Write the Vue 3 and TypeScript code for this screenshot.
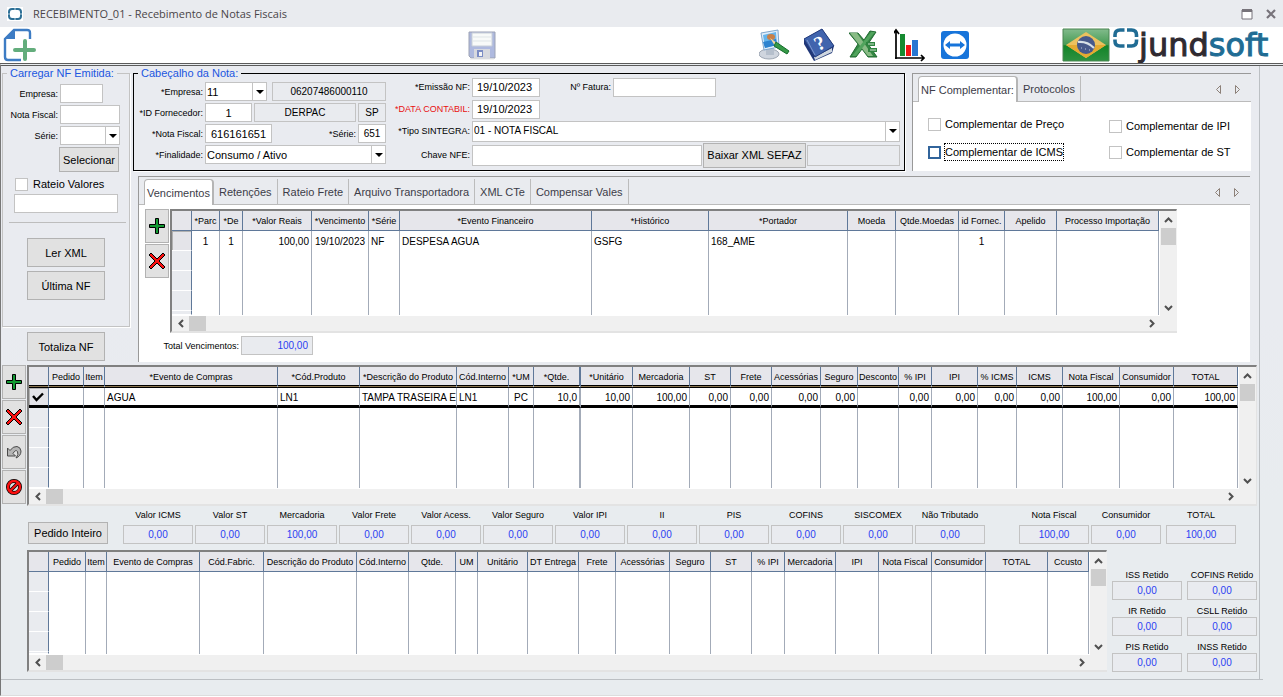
<script setup lang="ts">
import { ref } from 'vue'

interface Column {
  title: string
  width: number
  align?: 'left' | 'center' | 'right'
  value?: string
}

interface Total {
  id: string
  label: string
  value: string
}

const col = (title: string, width: number, value = '', align: Column['align'] = 'right'): Column => ({ title, width, value, align })

const vencimentos: Column[] = [
  col('*Parc', 28, '1', 'center'),
  col('*De', 23, '1', 'center'),
  col('*Valor Reais', 69, '100,00'),
  col('*Vencimento', 57, '19/10/2023', 'center'),
  col('*Série', 31, 'NF', 'left'),
  col('*Evento Financeiro', 192, 'DESPESA AGUA', 'left'),
  col('*Histórico', 117, 'GSFG', 'left'),
  col('*Portador', 139, '168_AME', 'left'),
  col('Moeda', 48),
  col('Qtde.Moedas', 63),
  col('id Fornec.', 46, '1', 'center'),
  col('Apelido', 52),
  col('Processo Importação', 102),
]

const itens: Column[] = [
  col('Pedido', 35),
  col('Item', 21),
  col('*Evento de Compras', 173, 'AGUA', 'left'),
  col('*Cód.Produto', 82, 'LN1', 'left'),
  col('*Descrição do Produto', 97, 'TAMPA TRASEIRA E(', 'left'),
  col('Cód.Interno', 52, 'LN1', 'left'),
  col('*UM', 25, 'PC', 'center'),
  col('*Qtde.', 47, '10,0'),
  col('*Unitário', 52, '10,00'),
  col('Mercadoria', 57, '100,00'),
  col('ST', 41, '0,00'),
  col('Frete', 41, '0,00'),
  col('Acessórias', 49, '0,00'),
  col('Seguro', 37, '0,00'),
  col('Desconto', 41),
  col('% IPI', 33, '0,00'),
  col('IPI', 46, '0,00'),
  col('% ICMS', 39, '0,00'),
  col('ICMS', 46, '0,00'),
  col('Nota Fiscal', 57, '100,00'),
  col('Consumidor', 54, '0,00'),
  col('TOTAL', 64, '100,00'),
]

const pedidos: Column[] = [
  col('Pedido', 37), col('Item', 21), col('Evento de Compras', 93), col('Cód.Fabric.', 64),
  col('Descrição do Produto', 93), col('Cód.Interno', 52), col('Qtde.', 47), col('UM', 22),
  col('Unitário', 50), col('DT Entrega', 51), col('Frete', 37), col('Acessórias', 54),
  col('Seguro', 41), col('ST', 41), col('% IPI', 33), col('Mercadoria', 51), col('IPI', 43),
  col('Nota Fiscal', 53), col('Consumidor', 54), col('TOTAL', 62), col('Ccusto', 41),
]

const total = (id: string, label: string, value = '0,00'): Total => ({ id, label, value })

const impostos: Total[] = [
  total('v-icms', 'Valor ICMS'), total('v-st', 'Valor ST'), total('v-merc', 'Mercadoria', '100,00'),
  total('v-frete', 'Valor Frete'), total('v-acess', 'Valor Acess.'), total('v-seguro', 'Valor Seguro'),
  total('v-ipi', 'Valor IPI'), total('v-ii', 'II'), total('v-pis', 'PIS'), total('v-cofins', 'COFINS'),
  total('v-sisc', 'SISCOMEX'), total('v-nt', 'Não Tributado'),
]

const totais: Total[] = [
  total('t-nota', 'Nota Fiscal', '100,00'), total('t-cons', 'Consumidor'), total('t-total', 'TOTAL', '100,00'),
]

const retidos: Total[] = [
  total('r-iss', 'ISS Retido'), total('r-cofins', 'COFINS Retido'), total('r-ir', 'IR Retido'),
  total('r-csll', 'CSLL Retido'), total('r-pis', 'PIS Retido'), total('r-inss', 'INSS Retido'),
]

const abas = ['Vencimentos', 'Retenções', 'Rateio Frete', 'Arquivo Transportadora', 'XML CTe', 'Compensar Vales']
const abaAtiva = ref('Vencimentos')
const abasNota = ['NF Complementar:', 'Protocolos']
const abaNotaAtiva = ref('NF Complementar:')
</script>

<template>
  <div class="window">
    <header class="titlebar">
      <svg class="app-icon" width="16" height="14" viewBox="0 0 16 14" aria-hidden="true">
        <rect width="16" height="14" fill="#fff" />
        <rect x="2" y="2" width="12" height="10" rx="3" fill="none" stroke="#2c6f96" stroke-width="2" />
        <path d="M8 1v2M8 11v2M1 7h2M13 7h2" stroke="#b9d0de" />
      </svg>
      <h1>RECEBIMENTO_01 - Recebimento de Notas Fiscais</h1>
      <button class="plain" aria-label="Maximizar">
        <svg width="12" height="12" viewBox="0 0 12 12"><path d="M1 2h10v9H1z" fill="#fff" stroke="#77737a" /><path d="M1 1h10v3H1z" fill="#77737a" /></svg>
      </button>
      <button class="plain" aria-label="Fechar">
        <svg width="12" height="12" viewBox="0 0 12 12"><path d="M2 2l8 8M10 2l-8 8" stroke="#77737a" stroke-width="2.2" /></svg>
      </button>
    </header>

    <div class="toolbar">
      <button class="plain" aria-label="Novo">
        <svg width="34" height="34" viewBox="0 0 34 34">
          <path d="M27 11V5q0-3-3-3H11L2 11v18q0 3 3 3h13" fill="none" stroke="#3d7cc4" stroke-width="2.4" />
          <path d="M12 1v10H1z" fill="#3d7cc4" />
          <path d="M22 13v18M12 22h19" stroke="#63ad7c" stroke-width="4" stroke-linecap="round" />
        </svg>
      </button>
      <button class="plain" aria-label="Salvar">
        <svg width="28" height="30" viewBox="0 0 28 30">
          <path d="M1 2h26v26H3l-2-2z" fill="#aeb9df" stroke="#9da3b5" />
          <path d="M4 3h20v13H4z" fill="#f8faf9" stroke="#c8cfd8" /><path d="M5 7h18M5 11h18" stroke="#dfe5e7" />
          <path d="M6 19h16v9H6z" fill="#d7d9df" /><path d="M9 20h6v7H9z" fill="#7b8cc4" /><path d="M11 22h3v4h-3z" fill="#f5f5f5" />
          <path d="M2 29h24" stroke="#e5e5e5" />
        </svg>
      </button>
      <div class="tools">
        <button class="plain" aria-label="Personalizar">
          <svg width="32" height="34" viewBox="0 0 32 34">
            <ellipse cx="10" cy="26" rx="10" ry="5" fill="#cfd5de" stroke="#9da6b3" />
            <path d="M7 20h8v7H7z" fill="#b5bfcc" />
            <path d="M2 5l17-3 1 17-15 3z" fill="#e1eefa" stroke="#7fa6cc" /><path d="M4 7l13-3 1 13-12 3z" fill="#65b5ec" />
            <path d="M4 14l13-3 1 6-12 3z" fill="#2d83cf" />
            <ellipse cx="12" cy="9" rx="4" ry="3" fill="#c88048" /><path d="M11 10l7 5-2 3z" fill="#f1d7a5" />
            <path d="M17 14l13 9-2 3-13-8z" fill="#369947" stroke="#146d2c" />
          </svg>
        </button>
        <button class="plain" aria-label="Ajuda">
          <svg width="32" height="34" viewBox="1 0 32 34">
            <path d="M1 11L19 1l12 17-2 7-18 8L1 16z" fill="#1f3677" />
            <path d="M11 29l18-9v4l-17 8z" fill="#ced6df" /><path d="M1 11L19 1l12 17-19 11z" fill="#4164ad" stroke="#263e7e" />
            <path d="M4 12l8 15" stroke="#7b95cd" />
            <text x="12" y="22" transform="rotate(-27 16 16)" font-family="Liberation Serif, serif" font-size="20" font-weight="700" fill="#fff">?</text>
          </svg>
        </button>
        <button class="plain" aria-label="Excel">
          <svg width="32" height="34" viewBox="1 0 32 34">
            <path d="M1 5h9l6 7 6-9 6 1-8 12 9 13h-9l-6-8-6 8H2l8-13z" fill="#338743" stroke="#226b32" />
            <path d="M2 5h7l16 23h-5z" fill="#89bb85" /><path d="M23 4h4L8 28H4z" fill="#51a45d" />
            <path d="M18 14h9v4h-9zM20 20h9v4h-9z" fill="#2f8440" />
            <path d="M20 16h6M22 22h6" stroke="#c8dfc8" />
          </svg>
        </button>
        <button class="plain" aria-label="Gráficos">
          <svg width="32" height="34" viewBox="2 0 32 34">
            <path d="M4 31V3M1 6l3-4 3 4M3 30h28M29 27l3 3-3 3" stroke="#000" stroke-width="1.7" fill="none" />
            <path d="M8 6h5v22H8z" fill="#168a30" /><path d="M14 17h5v11h-5z" fill="#f11616" /><path d="M20 12h6v16h-6z" fill="#2776d2" />
          </svg>
        </button>
        <button class="plain" aria-label="Acesso remoto">
          <svg width="32" height="34" viewBox="0 0 32 34">
            <rect x="2" y="3" width="28" height="28" rx="3" fill="#1774da" /><circle cx="16" cy="17" r="11.5" fill="#fff" />
            <path d="M6 17l5-4v2.500h10V13l5 4-5 4v-2.500H11V21z" fill="#1774da" />
          </svg>
        </button>
      </div>
      <svg class="flag" width="48" height="34" viewBox="0 0 48 34" role="img" aria-label="Brasil">
        <defs><linearGradient id="green" x2="0" y2="1"><stop stop-color="#82bb8c" /><stop offset=".5" stop-color="#449a52" /><stop offset=".52" stop-color="#128428" /><stop offset="1" stop-color="#2d9140" /></linearGradient></defs>
        <path d="M1 1h46v32H1z" fill="url(#green)" stroke="#4b8553" />
        <path d="M24 4l20 13-20 13L4 17z" fill="#ecc15f" /><path d="M4 17h40L24 30z" fill="#e4aa31" />
        <circle cx="24" cy="17" r="9" fill="#47598b" /><path d="M16 14q9-1 16 6" stroke="#d8e1e8" stroke-width="2" fill="none" />
        <path d="M19 20h1m3 1h1m3 1h1" stroke="#bdc9dc" />
      </svg>
      <svg class="brand" width="158" height="36" viewBox="0 0 158 36" role="img" aria-label="jundsoft">
        <path d="M12.500 3H8Q3 3 3 8v2M3 12.500V14q0 5 5 5h4.500M15 3h4.500q5 0 5 5v2M24.500 12.500V14q0 5-5 5H15" fill="none" stroke="#206c94" stroke-width="3.600" />
        <text x="27" y="29" class="brand-text"><tspan fill="#2f2a31">jund</tspan><tspan fill="#206c94">soft</tspan></text>
      </svg>
    </div>

    <div class="body">
      <main class="sheet">
        <section class="top">
          <div class="side">
            <fieldset class="box load">
              <legend>Carregar NF Emitida:</legend>
              <div class="row"><label for="c-emp">Empresa:</label><input id="c-emp" class="w43"></div>
              <div class="row"><label for="c-nf">Nota Fiscal:</label><input id="c-nf" class="w60"></div>
              <div class="row"><label for="c-serie">Série:</label>
                <span class="combo w60"><select id="c-serie"><option></option></select><i class="arrow"></i></span></div>
              <button class="btn select-btn">Selecionar</button>
              <label class="check"><input type="checkbox">Rateio Valores</label>
              <input class="rateio" aria-label="Rateio">
              <hr>
              <button class="btn wide">Ler XML</button>
              <button class="btn wide">Última NF</button>
            </fieldset>
            <button class="btn wide total-btn">Totaliza NF</button>
          </div>

          <div class="right">
            <div class="head-row">
              <fieldset class="box head">
                <legend>Cabeçalho da Nota:</legend>
                <div class="group-a">
                  <div class="row"><label for="h-emp">*Empresa:</label>
                    <span class="combo w62"><select id="h-emp"><option>11</option></select><i class="arrow"></i></span>
                    <input class="ro grow push" readonly value="06207486000110" aria-label="CNPJ"></div>
                  <div class="row"><label for="h-forn">*ID Fornecedor:</label><input id="h-forn" class="w47 mid" value="1">
                    <input class="ro grow" readonly value="DERPAC" aria-label="Fornecedor"><input class="ro w28" readonly value="SP" aria-label="UF"></div>
                  <div class="row"><label for="h-nf">*Nota Fiscal:</label><input id="h-nf" class="w67 mid" value="616161651">
                    <label class="grow" for="h-serie">*Série:</label><input id="h-serie" class="w28 small" value="651"></div>
                  <div class="row"><label for="h-fin">*Finalidade:</label>
                    <span class="combo grow"><select id="h-fin"><option>Consumo / Ativo</option></select><i class="arrow"></i></span></div>
                </div>
                <div class="group-b">
                  <div class="row"><label for="h-emis">*Emissão NF:</label><input id="h-emis" class="w68" value="19/10/2023">
                    <label class="fatura" for="h-fat">Nº Fatura:</label><input id="h-fat" class="w103"></div>
                  <div class="row"><label class="red" for="h-data">*DATA CONTABIL:</label><input id="h-data" class="w68" value="19/10/2023"></div>
                  <div class="row"><label for="h-tipo">*Tipo SINTEGRA:</label>
                    <span class="combo grow small tall"><select id="h-tipo"><option>01 - NOTA FISCAL</option></select><i class="arrow"></i></span></div>
                  <div class="row"><label for="h-chave">Chave NFE:</label><input id="h-chave" class="grow tall">
                    <button class="btn sefaz">Baixar XML SEFAZ</button><input class="ro w93 tall" readonly aria-label="Situação"></div>
                </div>
              </fieldset>

              <section class="tabs">
                <nav class="strip">
                  <button v-for="a in abasNota" :key="a" class="tab" :class="{ on: a === abaNotaAtiva }" @click="abaNotaAtiva = a">{{ a }}</button>
                  <span class="nav-arrows"><button class="plain" aria-label="Anterior"><svg width="7" height="11" viewBox="0 0 7 11"><path d="M5.5 1.5v8l-4-4z" fill="none" stroke="#8c8078" /></svg></button>
                    <button class="plain" aria-label="Próxima"><svg width="7" height="11" viewBox="0 0 7 11"><path d="M1.5 1.5v8l4-4z" fill="none" stroke="#8c8078" /></svg></button></span>
                </nav>
                <div class="checks">
                  <div>
                    <label class="check"><input type="checkbox"><span>Complementar de Preço</span></label>
                    <label class="check focus"><input type="checkbox"><span>Complementar de ICMS</span></label>
                  </div>
                  <div>
                    <label class="check"><input type="checkbox"><span>Complementar de IPI</span></label>
                    <label class="check"><input type="checkbox"><span>Complementar de ST</span></label>
                  </div>
                </div>
              </section>
            </div>

            <section class="tabs payments">
              <nav class="strip low">
                <button v-for="a in abas" :key="a" class="tab" :class="{ on: a === abaAtiva }" @click="abaAtiva = a">{{ a }}</button>
                <span class="nav-arrows"><button class="plain" aria-label="Anterior"><svg width="7" height="11" viewBox="0 0 7 11"><path d="M5.5 1.5v8l-4-4z" fill="none" stroke="#8c8078" /></svg></button>
                  <button class="plain" aria-label="Próxima"><svg width="7" height="11" viewBox="0 0 7 11"><path d="M1.5 1.5v8l4-4z" fill="none" stroke="#8c8078" /></svg></button></span>
              </nav>
              <div class="pay-body">
                <div class="actions">
                  <button class="btn act" aria-label="Incluir vencimento"><svg width="18" height="18" viewBox="0 0 18 18"><path d="M7.500 1.500h3v6h6v3h-6v6h-3v-6h-6v-3h6z" fill="#129a32" stroke="#000" /></svg></button>
                  <button class="btn act" aria-label="Excluir vencimento"><svg width="18" height="18" viewBox="0 0 18 18"><path d="M3 1l6 6 6-6 2 2-6 6 6 6-2 2-6-6-6 6-2-2 6-6-6-6z" fill="#fb1010" stroke="#000" /></svg></button>
                </div>
                <div class="grid">
                  <table>
                    <colgroup><col :style="{ width: '20px' }"><col v-for="c in vencimentos" :key="c.title" :style="{ width: c.width + 'px' }"></colgroup>
                    <thead><tr><th></th><th v-for="c in vencimentos" :key="c.title">{{ c.title }}</th></tr></thead>
                    <tbody>
                      <tr class="data"><td class="mark on"></td><td v-for="c in vencimentos" :key="c.title" :class="c.align">{{ c.value }}</td></tr>
                      <tr v-for="n in 3" :key="n"><td class="mark"></td><td v-for="c in vencimentos" :key="c.title"></td></tr>
                      <tr class="cut"><td class="mark"></td><td v-for="c in vencimentos" :key="c.title"></td></tr>
                    </tbody>
                  </table>
                  <div class="vbar"><button class="plain" aria-label="Acima"><svg width="9" height="6" viewBox="0 0 9 6"><path d="M1 5l3.500-3.500L8 5" fill="none" stroke="#505050" stroke-width="2" /></svg></button><i class="thumb"></i>
                    <button class="plain last" aria-label="Abaixo"><svg width="9" height="6" viewBox="0 0 9 6"><path d="M1 1l3.500 3.500L8 1" fill="none" stroke="#505050" stroke-width="2" /></svg></button></div>
                  <div class="hbar"><button class="plain" aria-label="Esquerda"><svg width="6" height="9" viewBox="0 0 6 9"><path d="M5 1L1.500 4.500 5 8" fill="none" stroke="#505050" stroke-width="2" /></svg></button><i class="thumb"></i>
                    <button class="plain last" aria-label="Direita"><svg width="6" height="9" viewBox="0 0 6 9"><path d="M1 1l3.500 3.500L1 8" fill="none" stroke="#505050" stroke-width="2" /></svg></button></div>
                </div>
                <div class="pay-total"><label for="tv">Total Vencimentos:</label><input id="tv" class="ro blue" readonly value="100,00"></div>
              </div>
            </section>
          </div>
        </section>

        <section class="items">
          <div class="actions">
            <button class="btn act" aria-label="Incluir item"><svg width="18" height="18" viewBox="0 0 18 18"><path d="M7.500 1.500h3v6h6v3h-6v6h-3v-6h-6v-3h6z" fill="#129a32" stroke="#000" /></svg></button>
            <button class="btn act" aria-label="Excluir item"><svg width="18" height="18" viewBox="0 0 18 18"><path d="M3 1l6 6 6-6 2 2-6 6 6 6-2 2-6-6-6 6-2-2 6-6-6-6z" fill="#fb1010" stroke="#000" /></svg></button>
            <button class="btn act" aria-label="Desfazer"><svg width="16" height="16" viewBox="0 0 16 16"><path d="M1.500 4v8h8L7 9.500Q9.500 5 11.500 7.500q1.500 3-1.500 6.500 5-2 5-7-.5-4-4-4.500Q7 2 4 6.500z" fill="#b5b5b5" stroke="#4a4a4a" /></svg></button>
            <button class="btn act" aria-label="Cancelar"><svg width="18" height="18" viewBox="0 0 18 18"><circle cx="9" cy="9" r="6" fill="none" stroke="#000" stroke-width="4" /><path d="M5 13l8-8" stroke="#000" stroke-width="3.500" /><circle cx="9" cy="9" r="6" fill="none" stroke="#fb1010" stroke-width="2.500" /><path d="M5 13l8-8" stroke="#fb1010" stroke-width="2" /></svg></button>
          </div>
          <div class="grid">
            <table class="active-grid">
              <colgroup><col :style="{ width: '20px' }"><col v-for="c in itens" :key="c.title" :style="{ width: c.width + 'px' }"></colgroup>
              <thead><tr><th></th><th v-for="c in itens" :key="c.title" :class="{ thick: c.title === '*Qtde.' }">{{ c.title }}</th></tr></thead>
              <tbody>
                <tr class="current">
                  <td class="mark on"><svg width="12" height="10" viewBox="0 0 12 10"><path d="M1 4l3.500 4L11 1.500" fill="none" stroke="#000" stroke-width="2.400" /></svg></td>
                  <td v-for="c in itens" :key="c.title" :class="[c.align, { thick: c.title === '*Qtde.' }]">{{ c.value }}</td>
                </tr>
                <tr v-for="n in 4" :key="n"><td class="mark"></td><td v-for="c in itens" :key="c.title" :class="{ thick: c.title === '*Qtde.' }"></td></tr>
              </tbody>
            </table>
            <div class="vbar"><button class="plain" aria-label="Acima"><svg width="9" height="6" viewBox="0 0 9 6"><path d="M1 5l3.500-3.500L8 5" fill="none" stroke="#505050" stroke-width="2" /></svg></button><i class="thumb"></i>
              <button class="plain last" aria-label="Abaixo"><svg width="9" height="6" viewBox="0 0 9 6"><path d="M1 1l3.500 3.500L8 1" fill="none" stroke="#505050" stroke-width="2" /></svg></button></div>
            <div class="hbar"><button class="plain" aria-label="Esquerda"><svg width="6" height="9" viewBox="0 0 6 9"><path d="M5 1L1.500 4.500 5 8" fill="none" stroke="#505050" stroke-width="2" /></svg></button><i class="thumb"></i>
              <button class="plain last" aria-label="Direita"><svg width="6" height="9" viewBox="0 0 6 9"><path d="M1 1l3.500 3.500L1 8" fill="none" stroke="#505050" stroke-width="2" /></svg></button></div>
          </div>
        </section>

        <section class="totals">
          <button class="btn order-btn">Pedido Inteiro</button>
          <div class="sums">
            <div v-for="t in impostos" :key="t.id" class="sum"><label :for="t.id">{{ t.label }}</label><input :id="t.id" class="ro blue" readonly :value="t.value"></div>
          </div>
          <div class="sums finals">
            <div v-for="t in totais" :key="t.id" class="sum"><label :for="t.id">{{ t.label }}</label><input :id="t.id" class="ro blue" readonly :value="t.value"></div>
          </div>
        </section>

        <section class="orders">
          <div class="grid">
            <table>
              <colgroup><col :style="{ width: '20px' }"><col v-for="c in pedidos" :key="c.title" :style="{ width: c.width + 'px' }"></colgroup>
              <thead><tr><th></th><th v-for="c in pedidos" :key="c.title">{{ c.title }}</th></tr></thead>
              <tbody>
                <tr v-for="n in 4" :key="n"><td class="mark"></td><td v-for="c in pedidos" :key="c.title"></td></tr>
                <tr class="tiny"><td class="mark"></td><td v-for="c in pedidos" :key="c.title"></td></tr>
              </tbody>
            </table>
            <div class="vbar"><button class="plain" aria-label="Acima"><svg width="9" height="6" viewBox="0 0 9 6"><path d="M1 5l3.500-3.500L8 5" fill="none" stroke="#505050" stroke-width="2" /></svg></button><i class="thumb"></i>
              <button class="plain last" aria-label="Abaixo"><svg width="9" height="6" viewBox="0 0 9 6"><path d="M1 1l3.500 3.500L8 1" fill="none" stroke="#505050" stroke-width="2" /></svg></button></div>
            <div class="hbar"><button class="plain" aria-label="Esquerda"><svg width="6" height="9" viewBox="0 0 6 9"><path d="M5 1L1.500 4.500 5 8" fill="none" stroke="#505050" stroke-width="2" /></svg></button><i class="thumb"></i>
              <button class="plain last" aria-label="Direita"><svg width="6" height="9" viewBox="0 0 6 9"><path d="M1 1l3.500 3.500L1 8" fill="none" stroke="#505050" stroke-width="2" /></svg></button></div>
          </div>
          <div class="withheld">
            <div v-for="t in retidos" :key="t.id" class="sum"><label :for="t.id">{{ t.label }}</label><input :id="t.id" class="ro blue" readonly :value="t.value"></div>
          </div>
        </section>
      </main>
      <footer class="foot"></footer>
    </div>
  </div>
</template>

<style>
body { background: #fff; }
</style>

<style scoped>
* { box-sizing: border-box; }
.window {
  min-height: 100vh; padding-bottom: 1px; display: flex; flex-direction: column; overflow: hidden;
  font-family: "Liberation Sans", Arial, sans-serif; font-size: 9px; line-height: 14px; color: #000;
}
button, input, select { font: inherit; color: inherit; margin: 0; }
svg { display: block; }
.plain { border: 0; padding: 0; background: none; display: flex; align-items: center; justify-content: center; }
.titlebar { height: 27px; padding: 0 6px 0; display: flex; align-items: center; gap: 12px; background: #e9ebef; }
.titlebar h1 { flex: 1; margin: 0 0 0 -2px; font: 11px/16px "Open Sans", "Noto Sans", sans-serif; color: #4a4548; }
.app-icon { margin-left: 1px; }
.toolbar { height: 36px; padding: 0 13px 0 3px; display: grid; grid-template-columns: 465px 1fr auto auto auto; align-items: center; justify-items: start; background: #fff; }
.tools { display: flex; gap: 13px; }
.flag { margin-left: 91px; }
.brand { margin-left: 2px; }
.brand-text { font: 32px "DejaVu Sans", sans-serif; stroke-width: 1; }
.brand-text tspan:first-child { stroke: #2f2a31; }
.brand-text tspan:last-child { stroke: #206c94; }

.body { flex: 1; display: flex; flex-direction: column; border-top: 3px double #5b5b5b; border-left: 1px solid #777; background: linear-gradient(#e9ebf0 40%, #e8ecef 70%); border-bottom: 1px solid #ddd; }
.sheet { flex: 1; margin-right: 23px; padding: 7px 8px 7px 1px; border-right: 1px solid #bbbfc3; display: flex; flex-direction: column; }
.foot { height: 16px; border-top: 1px solid #bbbfc3; margin-right: 20px; }

input, select { height: 19px; border: 1px solid #c3c3c3; background: #fff; padding: 0 4px; border-radius: 0; min-width: 0; width: 0; outline: 0; appearance: none; font-size: 11px; }
input.ro { background: #e9ebef; text-align: center; font-size: 10px; }
input.blue { color: #2b3ff2; }
.w28 { width: 28px; padding: 0; text-align: center; } .w43 { width: 43px; } .w47 { width: 47px; } .w60 { width: 60px; } .w62 { width: 62px; }
.w67 { width: 67px; } .w68 { width: 68px; } .w93 { width: 93px; } .w103 { width: 103px; }
.mid { text-align: center; }
.grow { flex: 1; }
.push { margin-left: 3px; }
.tall, .tall select { height: 21px; }
input.small, .small select { font-size: 10px; }
.combo { display: grid; }
.combo > * { grid-area: 1 / 1; }
.combo select { width: 100%; padding: 0 16px 0 1px; }
.arrow { justify-self: end; width: 15px; margin: 1px 0; border-left: 1px solid #c3c3c3; display: grid; place-items: center; pointer-events: none; }
.arrow::after { content: ""; border: 4px solid transparent; border-top-color: #000; border-bottom: 0; }
.row { display: flex; align-items: center; gap: 2px; }
.row label { text-align: right; white-space: nowrap; }

.btn { border: 1px solid #b2b2b2; background: #e1e1e1; padding: 0; font-size: 11px; white-space: nowrap; display: flex; align-items: center; justify-content: center; }
.box { margin: 0; min-width: 0; border: 1px solid #c3c3c3; box-shadow: 1px 1px 0 #fff; padding: 0; }
.box legend { height: 1px; line-height: 1px; font-size: 11px; color: #2156e0; padding: 0 3px; margin-left: 4px; white-space: nowrap; }

.top { display: grid; grid-template-columns: 131px 1fr; }
.side { display: flex; flex-direction: column; align-items: start; }
.load { width: 128px; height: 254px; }
.load .row { margin-bottom: 2px; }
.load .row:nth-of-type(1) { margin-top: 10px; }
.load .row label { width: 55px; }
.select-btn { width: 60px; height: 25px; margin-left: 56px; }
.check { display: flex; align-items: center; gap: 5px; font-size: 11px; white-space: nowrap; }
.check input { width: 13px; height: 13px; padding: 0; }
.load .check { margin: 5px 0 3px 12px; }
.rateio { width: 104px; margin-left: 11px; display: block; }
.load hr { margin: 9px 3px 15px 6px; border: 0; border-top: 1px solid #bdbdbd; }
.wide { width: 78px; height: 29px; }
.load .wide { margin: 0 0 4px 24px; }
.total-btn { margin: 5px 0 0 25px; }

.head-row { display: grid; grid-template-columns: 1fr 339px; gap: 7px; }
.head { border-color: #000; display: grid; grid-template-columns: 252px 1fr; padding-right: 4px; }
.group-a { padding: 8px 0 0 2px; display: flex; flex-direction: column; gap: 2px; }
.group-a .row > label:first-child { width: 67px; }
.group-b { padding: 2px 0; display: grid; grid-template-rows: 22px 22px 22px 26px; }
.group-b .row > label:first-child { width: 84px; }
.red { color: #e81010; }
.row .fatura { width: 69px; }
.sefaz { width: 103px; height: 25px; margin: 0 -1px; }

.tabs { background: #fff; border: solid #999; border-width: 1px 0 0 1px; }
.strip { height: 28px; padding: 2px 0 0 5px; display: flex; background: linear-gradient(#bbb, #bbb) bottom / 100% 1px no-repeat #e9ebef; }
.tab { border: 0; border-right: 1px solid #bcbcbc; background: none; padding: 0 5px; margin-bottom: 1px; font-size: 11px; color: #3c3c48; white-space: nowrap; }
.tab.on { background: #fff; border: 1px solid #b5b5b5; border-width: 1px 2px 0 1px; border-radius: 4px 4px 0 0; margin-bottom: 0; padding: 0 2px; }
.nav-arrows { margin-left: auto; padding-right: 10px; display: flex; gap: 12px; align-items: center; }
.checks { display: grid; grid-template-columns: 181px 1fr; padding: 13px 0 0 15px; }
.checks > div { display: flex; flex-direction: column; align-items: start; gap: 10px; }
.checks > div:last-child { gap: 8px; padding-top: 2px; }
.checks .check { gap: 3px; }
.checks .check span { border: 1px solid transparent; padding: 1px 0; }
.checks .focus span { border: 1px dotted #000; }
.checks .focus input { border: 2px solid #31649b; }

.payments { margin: 5px 1px 0 5px; }
.pay-body { display: grid; grid-template-columns: 25px 1fr; padding: 4px 73px 7px 6px; }
.actions { display: flex; flex-direction: column; gap: 1px; }
.act { width: 24px; height: 34px; }
.pay-total { grid-column: 1 / -1; display: flex; align-items: center; gap: 2px; padding: 3px 0 0 16px; }
.pay-total label { width: 78px; text-align: right; }
.pay-total input { width: 72px; text-align: right; }

.grid { display: grid; grid-template-columns: 1fr 18px; grid-template-rows: 1fr 15px; border: 2px solid #808080; border-color: #808080 #e3e3e3 #e3e3e3 #808080; border-right-width: 1px; background: #fff; min-width: 0; }
table { width: 100%; table-layout: fixed; border-collapse: separate; border-spacing: 0; margin-bottom: 1px; }
th, td { padding: 0; height: 20px; overflow: hidden; white-space: nowrap; line-height: 14px; }
th { font-weight: 400; background: #e6e6eb; border-right: 1px solid #5f7899; border-bottom: 1px solid #5f7899; text-align: center; padding-top: 1px; }
td { border-right: 1px solid #a3abb8; padding: 0 2px; font-size: 10px; }
.data td, .current td { padding-top: 2px; }
td.right { text-align: right; } td.center { text-align: center; }
td.mark { background: #e9ebef; border-right-color: #5f7899; border-bottom: 1px solid #fff; padding: 0 3px; }
td.mark.on { background: #e4e4e9; box-shadow: inset 1px 1px 0 #b0b0b0; }
.cut td { height: 4px; } .tiny td { height: 2px; }
.active-grid th { height: 21px; border-bottom: 3px double #000; background: linear-gradient(#e6e6eb 18px, #8a7550 18px) border-box; }
.current td, .current td.mark { border-bottom: 3px solid #000; height: 20px; }
.thick { border-right-width: 2px; }
.vbar, .hbar { background: #f0f0f0; display: flex; }
.vbar { flex-direction: column; align-items: center; margin-left: 1px; }
.vbar .plain { width: 17px; height: 17px; }
.hbar { grid-column: 1 / -1; padding-right: 17px; }
.hbar .plain { width: 17px; height: 15px; }
.thumb { background: #cdcdcd; }
.vbar .thumb { width: 15px; height: 17px; } .hbar .thumb { width: 17px; height: 15px; }
.vbar .last { margin-top: auto; } .hbar .last { margin-left: auto; }

.items { margin: 3px -6px 0 0; display: grid; grid-template-columns: 25px 1fr; }
.totals { display: flex; align-items: end; padding: 2px 15px 0 26px; }
.order-btn { width: 80px; height: 22px; margin-right: 15px; }
.sums { display: flex; gap: 2px; }
.sum { width: 70px; display: flex; flex-direction: column; align-items: center; gap: 2px; }
.sum input { width: 70px; }
.sum label { white-space: nowrap; line-height: 15px; }
.finals { margin-left: auto; }
.finals .sum:last-child { margin-left: 3px; }
.orders { display: grid; grid-template-columns: 1fr 145px; gap: 5px; margin: 6px -6px 0 25px; }
.withheld { display: grid; grid-template-columns: 70px 70px; column-gap: 5px; align-content: end; row-gap: 5px; }
.withheld .sum { gap: 0; }
.withheld .sum label { line-height: 12px; }
</style>
